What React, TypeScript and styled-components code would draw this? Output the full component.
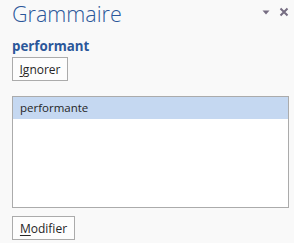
import React from "react";
import styled, { createGlobalStyle } from "styled-components";

const Global = createGlobalStyle`
  html, body { margin: 0; padding: 0; background: #f9f9f9; }
  body { font-family: "Open Sans", "Noto Sans", sans-serif; }
`;

const Pane = styled.div`
  width: 294px;
  height: 243px;
  box-sizing: border-box;
  padding: 0 5px 0 12px;
  display: flex;
  flex-direction: column;
  background: #f9f9f9;
  color: #262626;
`;

const Header = styled.div`
  display: flex;
  align-items: flex-start;
  justify-content: space-between;
  height: 32px;
`;

const Title = styled.h1`
  margin: 0;
  padding-top: 0px;
  font-weight: 300;
  font-size: 21.5px;
  line-height: 28px;
  color: #2b579a;
  letter-spacing: 0;
`;

const Controls = styled.div`
  display: flex;
  align-items: center;
  gap: 9px;
  padding-top: 7px;
  padding-right: 0px;
`;

const Word = styled.div`
  font-weight: 700;
  font-size: 13.3px;
  line-height: 20px;
  color: #2b579a;
  margin-top: 4px;
  height: 21px;
  margin-left: 0;
`;

const Button = styled.button<{ $w: number }>`
  align-self: flex-start;
  box-sizing: border-box;
  height: 24px;
  width: ${(p) => p.$w}px;
  border: 1px solid #ababab;
  background: #fdfdfd;
  font-family: inherit;
  font-size: 12px;
  color: #262626;
  padding: 0;
  display: flex;
  align-items: center;
  justify-content: center;
`;

const U = styled.span`
  text-decoration: underline;
  text-underline-offset: 2px;
`;

const List = styled.div`
  margin-top: 15px;
  box-sizing: border-box;
  width: 277px;
  height: 112px;
  border: 1px solid #ababab;
  background: #ffffff;
`;

const Item = styled.div<{ $selected?: boolean }>`
  height: 22px;
  line-height: 21px;
  padding-left: 7px;
  font-size: 11.5px;
  color: #262626;
  background: ${(p) => (p.$selected ? "#c5d8f1" : "transparent")};
`;

const Footer = styled.div`
  margin-top: 8px;
`;

const Arrow = () => (
  <svg width="8" height="9" viewBox="0 0 8 9">
    <path d="M0.5 2.5 H7.5 L4 6.5 Z" fill="#766d82" />
  </svg>
);

const Close = () => (
  <svg width="10" height="10" viewBox="0 0 10 10">
    <path d="M1.5 1.5 L8.5 8.5 M8.5 1.5 L1.5 8.5" stroke="#766d82" strokeWidth="2" />
  </svg>
);

export default function App() {
  return (
    <>
      <Global />
      <Pane>
        <Header>
          <Title>Grammaire</Title>
          <Controls>
            <Arrow />
            <Close />
          </Controls>
        </Header>
        <Word>performant</Word>
        <Button $w={56}>
          <span>
            <U>I</U>gnorer
          </span>
        </Button>
        <List>
          <Item $selected>performante</Item>
        </List>
        <Footer>
          <Button $w={63}>
            <span>
              <U>M</U>odifier
            </span>
          </Button>
        </Footer>
      </Pane>
    </>
  );
}
